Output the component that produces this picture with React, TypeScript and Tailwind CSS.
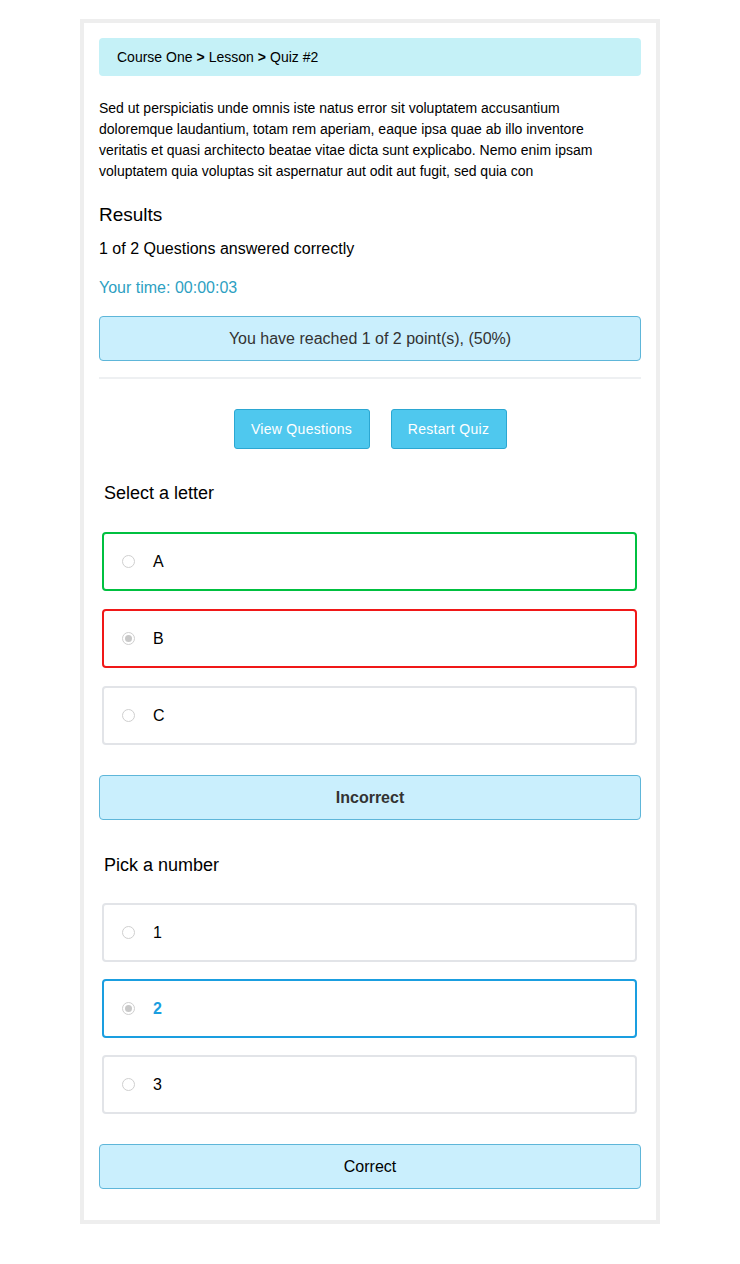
import React from 'react'

type Option = {
  label: string
  checked?: boolean
  state?: 'correct' | 'wrong' | 'selected'
}

function Radio({ checked }: { checked?: boolean }) {
  return (
    <span className="flex h-[13px] w-[13px] shrink-0 items-center justify-center rounded-full border border-[#cfcfcf] bg-white">
      {checked && <span className="h-[7px] w-[7px] rounded-full bg-[#c8c8c8]" />}
    </span>
  )
}

function Question({ title, options, listClass }: { title: string; options: Option[]; listClass: string }) {
  return (
    <div>
      <h3 className="ml-[5px] text-[18px] leading-[20px] text-black">{title}</h3>
      <div className={`flex flex-col ${listClass}`}>
        {options.map((o) => {
          const border =
            o.state === 'correct'
              ? 'border-[#00c040]'
              : o.state === 'wrong'
              ? 'border-[#f01818]'
              : o.state === 'selected'
              ? 'border-[#1a9ee0]'
              : 'border-[#e2e4e8]'
          return (
            <label
              key={o.label}
              className={`ml-[3px] mr-[4px] flex h-[59px] items-center rounded-[4px] border-2 ${border} pl-[18px]`}
            >
              <Radio checked={o.checked} />
              <span
                className={`ml-[18px] text-[16px] ${
                  o.state === 'selected' ? 'font-bold text-[#1a9ee0]' : 'text-black'
                }`}
              >
                {o.label}
              </span>
            </label>
          )
        })}
      </div>
    </div>
  )
}

export default function App() {
  return (
    <div className="min-h-screen bg-white pt-[19px] pb-[40px] font-['Liberation_Sans',Arial,sans-serif]">
      <div className="mx-auto w-[580px] border-4 border-[#eeeeee] px-[15px] pt-[15px] pb-[31px]">
        {/* Breadcrumb */}
        <div className="flex h-[38px] items-center rounded-[4px] bg-[#c5f1f7] px-[18px] text-[14px] text-black">
          Course One <b className="mx-[4px]">&gt;</b> Lesson <b className="mx-[4px]">&gt;</b> Quiz #2
        </div>

        <p className="mt-[22px] pr-[30px] text-[14px] leading-[21px] text-black">
          Sed ut perspiciatis unde omnis iste natus error sit voluptatem accusantium doloremque laudantium,
          totam rem aperiam, eaque ipsa quae ab illo inventore veritatis et quasi architecto beatae vitae
          dicta sunt explicabo. Nemo enim ipsam voluptatem quia voluptas sit aspernatur aut odit aut fugit,
          sed quia con
        </p>

        {/* Results */}
        <h2 className="mt-[21px] text-[19px] leading-[24px] text-black">Results</h2>
        <p className="mt-[12px] text-[16px] leading-[20px] text-black">1 of 2 Questions answered correctly</p>
        <p className="mt-[19px] text-[16px] leading-[20px] text-[#2e9fc2]">Your time: 00:00:03</p>

        <div className="mt-[18px] flex h-[45px] items-center justify-center rounded-[4px] border border-[#5eb6d9] bg-[#caeffd] text-[16px] text-[#333333]">
          You have reached 1 of 2 point(s), (50%)
        </div>

        <hr className="mt-[16px] border-t-2 border-[#eef0f2]" />

        <div className="mt-[30px] flex justify-center gap-[21px]">
          <button className="h-[40px] w-[136px] rounded-[3px] border border-[#2ba7d2] bg-[#4fc8ee] text-[14px] tracking-[0.3px] text-white">
            View Questions
          </button>
          <button className="h-[40px] w-[116px] rounded-[3px] border border-[#2ba7d2] bg-[#4fc8ee] text-[14px] tracking-[0.3px] text-white">
            Restart Quiz
          </button>
        </div>

        <div className="mt-[34px]">
          <Question
            title="Select a letter"
            listClass="mt-[29px] gap-[18px]"
            options={[
              { label: 'A', state: 'correct' },
              { label: 'B', state: 'wrong', checked: true },
              { label: 'C' },
            ]}
          />
        </div>

        <div className="mt-[30px] flex h-[45px] items-center justify-center rounded-[4px] border border-[#5eb6d9] bg-[#caeffd] text-[16px] font-bold text-[#333333]">
          Incorrect
        </div>

        <div className="mt-[35px]">
          <Question
            title="Pick a number"
            listClass="mt-[28px] gap-[17px]"
            options={[
              { label: '1' },
              { label: '2', state: 'selected', checked: true },
              { label: '3' },
            ]}
          />
        </div>

        <div className="mt-[30px] flex h-[45px] items-center justify-center rounded-[4px] border border-[#5eb6d9] bg-[#caeffd] text-[16px] text-black">
          Correct
        </div>
      </div>
    </div>
  )
}
